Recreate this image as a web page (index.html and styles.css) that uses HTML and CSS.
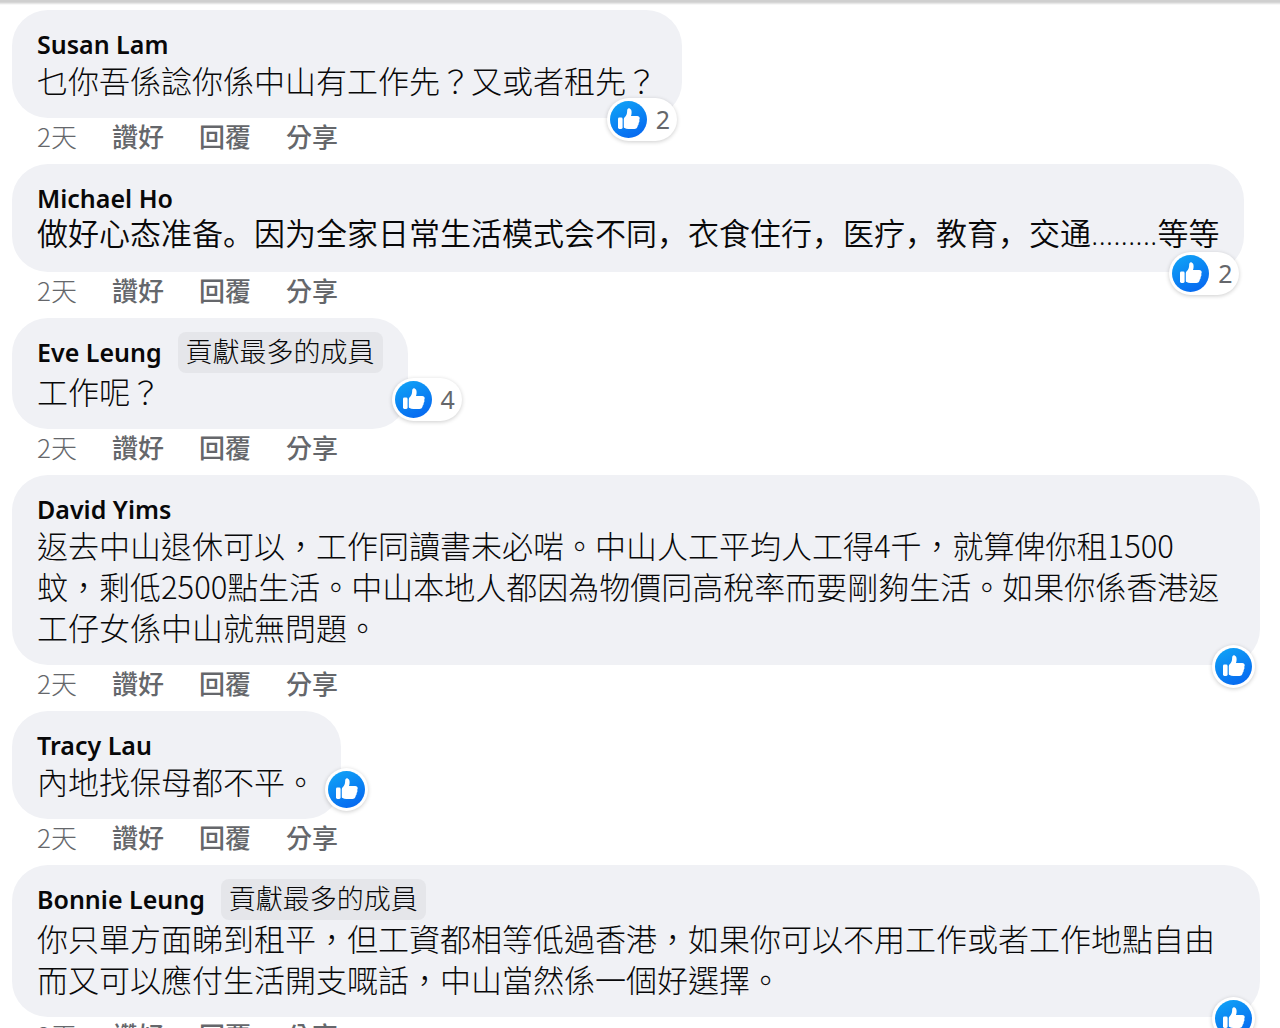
FILE: index.html
```html
<!DOCTYPE html>
<html lang="zh-Hant">
<head>
<meta charset="utf-8">
<meta name="viewport" content="width=device-width, initial-scale=1">
<title>留言</title>
<link rel="stylesheet" href="styles.css">
</head>
<body>
<svg class="defs" aria-hidden="true">
  <defs>
    <linearGradient id="like-fill" x1="0.2" y1="0" x2="0.7" y2="1">
      <stop offset="0" stop-color="#10a2f6"/>
      <stop offset="1" stop-color="#0668f0"/>
    </linearGradient>
    <symbol id="like" viewBox="0 0 37 37">
      <circle cx="18.500" cy="18.500" r="18.500" fill="url(#like-fill)"/>
      <rect x="8" y="16.500" width="4.600" height="11.500" rx="1.400" fill="#fff"/>
      <path fill="#fff" d="M13.800 18.500c0-1 .4-1.700 1.100-2.400 1.400-1.500 2-3 2.200-5.200.1-1.200 0-1.900.4-2.700.4-.8 1.400-1 2.200-.7 1.500.6 2 2.200 1.900 4.200 0 1.200-.3 2.300-.6 3.300h6.200c1.600 0 2.600 1 2.500 2.300 0 .6-.2 1.100-.5 1.600.3.500.4 1 .2 1.700-.1.600-.4 1.100-.8 1.400.1.500.1 1-.1 1.600-.2.500-.5.900-.9 1.200 0 .5 0 .9-.2 1.300-.5 1.200-1.500 1.900-3 1.900h-6c-1.600 0-2.800-.3-3.800-.9-.5-.3-.8-.6-.8-1.200z"/>
    </symbol>
  </defs>
</svg>
<main class="comments">
  <article class="comment">
    <div class="bubble">
      <header class="author"><a class="name" href="#susan">Susan Lam</a></header>
      <p class="text">乜你吾係諗你係中山有工作先？又或者租先？</p>
      <button class="reactions" type="button" aria-label="2 個讚好"><svg class="like"><use href="#like"/></svg><span class="count">2</span></button>
    </div>
    <footer class="actions"><time>2天</time><button type="button">讚好</button><button type="button">回覆</button><button type="button">分享</button></footer>
  </article>
  <article class="comment">
    <div class="bubble">
      <header class="author"><a class="name" href="#michael">Michael Ho</a></header>
      <p class="text text-sc" lang="zh-Hans">做好心态准备。因为全家日常生活模式会不同，衣食住行，医疗，教育，交通.........等等</p>
      <button class="reactions" type="button" aria-label="2 個讚好"><svg class="like"><use href="#like"/></svg><span class="count">2</span></button>
    </div>
    <footer class="actions"><time>2天</time><button type="button">讚好</button><button type="button">回覆</button><button type="button">分享</button></footer>
  </article>
  <article class="comment">
    <div class="bubble">
      <header class="author author-badged"><a class="name" href="#eve">Eve Leung</a><span class="badge">貢獻最多的成員</span></header>
      <p class="text">工作呢？</p>
      <button class="reactions reactions-side" type="button" aria-label="4 個讚好"><svg class="like"><use href="#like"/></svg><span class="count">4</span></button>
    </div>
    <footer class="actions"><time>2天</time><button type="button">讚好</button><button type="button">回覆</button><button type="button">分享</button></footer>
  </article>
  <article class="comment">
    <div class="bubble bubble-wide">
      <header class="author"><a class="name" href="#david">David Yims</a></header>
      <p class="text">返去中山退休可以，工作同讀書未必啱。中山人工平均人工得4千，就算俾你租1500<br>蚊，剩低2500點生活。中山本地人都因為物價同高稅率而要剛夠生活。如果你係香港返工仔女係中山就無問題。</p>
      <button class="reactions" type="button" aria-label="讚好"><svg class="like"><use href="#like"/></svg></button>
    </div>
    <footer class="actions"><time>2天</time><button type="button">讚好</button><button type="button">回覆</button><button type="button">分享</button></footer>
  </article>
  <article class="comment">
    <div class="bubble">
      <header class="author"><a class="name" href="#tracy">Tracy Lau</a></header>
      <p class="text">內地找保母都不平。</p>
      <button class="reactions reactions-side" type="button" aria-label="讚好"><svg class="like"><use href="#like"/></svg></button>
    </div>
    <footer class="actions"><time>2天</time><button type="button">讚好</button><button type="button">回覆</button><button type="button">分享</button></footer>
  </article>
  <article class="comment">
    <div class="bubble bubble-wide">
      <header class="author author-badged"><a class="name" href="#bonnie">Bonnie Leung</a><span class="badge">貢獻最多的成員</span></header>
      <p class="text">你只單方面睇到租平，但工資都相等低過香港，如果你可以不用工作或者工作地點自由而又可以應付生活開支嘅話，中山當然係一個好選擇。</p>
      <button class="reactions" type="button" aria-label="讚好"><svg class="like"><use href="#like"/></svg></button>
    </div>
    <footer class="actions"><time>2天</time><button type="button">讚好</button><button type="button">回覆</button><button type="button">分享</button></footer>
  </article>
</main>
</body>
</html>
```
FILE: styles.css
```css
* {
  box-sizing: border-box;
}

body {
  margin: 0;
  background: #fff;
  color: #080809;
  font-family: "Noto Sans CJK TC", sans-serif;
}

.defs {
  position: absolute;
  width: 0;
  height: 0;
}

.comments {
  display: flex;
  flex-direction: column;
  height: 100vh;
  overflow: hidden;
  padding: 10px 20px 0 12px;
  background: linear-gradient(#cfcfcf 2px, #fff 5px);
}

.comment {
  flex: none;
  display: flex;
  flex-direction: column;
  align-items: flex-start;
}

.bubble {
  position: relative;
  max-width: 100%;
  padding: 19px 25px 18px;
  border-radius: 36px;
  background: #f0f1f5;
}

.bubble-wide {
  width: 100%;
}

.author {
  display: flex;
  align-items: flex-start;
  gap: 16px;
  height: 30px;
}

.author-badged {
  height: 33px;
}

.name {
  color: inherit;
  font: 600 25px/30px "Noto Sans", sans-serif;
  text-decoration: none;
}

.badge {
  margin-top: -5px;
  padding: 0 8px 4px;
  border-radius: 8px;
  background: #e5e6ea;
  font-size: 27px;
  font-weight: 300;
  line-height: 37px;
}

.text {
  margin: 0;
  font-size: 31px;
  font-weight: 300;
  line-height: 41px;
}

.text-sc {
  font-family: "Open Sans", "Noto Sans CJK SC", sans-serif;
  font-weight: 350;
}

.reactions {
  position: absolute;
  right: 5px;
  bottom: -23px;
  display: flex;
  align-items: center;
  gap: 9px;
  padding: 3px;
  border: 0;
  border-radius: 22px;
  background: #fff;
  box-shadow: 0 1px 4px rgba(0, 0, 0, 0.2);
  color: #65676b;
  font: 25px/37px "Noto Sans", sans-serif;
}

.reactions-side {
  right: auto;
  bottom: 8px;
  left: calc(100% - 16px);
}

.like {
  display: block;
  width: 37px;
  height: 37px;
}

.count {
  padding-right: 4px;
}

.actions {
  display: flex;
  gap: 35px;
  height: 46px;
  padding-left: 25px;
  color: #65676b;
  font-size: 26px;
  font-weight: 300;
  line-height: 35px;
}

.actions button {
  height: 35px;
  padding: 0;
  border: 0;
  background: none;
  color: inherit;
  font: inherit;
  font-weight: 500;
}
```
